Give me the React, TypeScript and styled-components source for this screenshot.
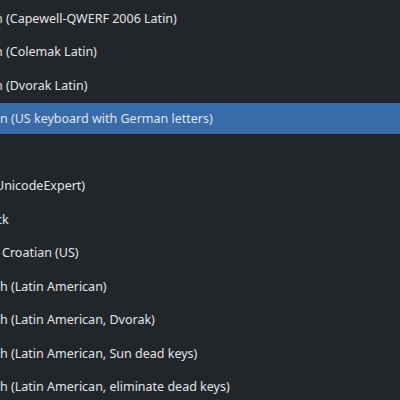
import React from 'react'
import styled, { createGlobalStyle } from 'styled-components'

const GlobalStyle = createGlobalStyle`
  html, body {
    margin: 0;
    padding: 0;
    background: #232629;
  }
  body {
    width: 400px;
    height: 400px;
    overflow: hidden;
  }
`

const ListView = styled.div`
  display: flex;
  flex-direction: column;
  width: 400px;
  height: 400px;
  overflow: hidden;
  background: #232629;
  font-family: 'Noto Sans', 'DejaVu Sans', sans-serif;
  font-size: 12.5px;
  color: #e2e4e6;
  padding-top: 1px;
  box-sizing: border-box;
`

const Row = styled.div<{ $selected?: boolean }>`
  flex: 0 0 33.5px;
  box-sizing: border-box;
  display: flex;
  align-items: center;
  padding-top: 1px;
  white-space: nowrap;
  overflow: hidden;
  background: ${({ $selected }) => ($selected ? '#376baa' : 'transparent')};
  border-top: 1px solid ${({ $selected }) => ($selected ? '#1d2023' : 'transparent')};
  border-bottom: 1px solid ${({ $selected }) => ($selected ? '#1d2023' : 'transparent')};
`

const Label = styled.span<{ $shift: number }>`
  flex: none;
  margin-left: ${({ $shift }) => $shift}px;
`

const layouts = [
  { text: 'n (Capewell-QWERF 2006 Latin)', shift: -5 },
  { text: 'n (Colemak Latin)', shift: -5 },
  { text: 'n (Dvorak Latin)', shift: -5 },
  { text: 'n (US keyboard with German letters)', shift: 0, selected: true },
  { text: '', shift: 0 },
  { text: 'UnicodeExpert)', shift: -5 },
  { text: 'ck', shift: -4 },
  { text: 'Croatian (US)', shift: 2 },
  { text: 'h (Latin American)', shift: 0 },
  { text: 'h (Latin American, Dvorak)', shift: 0 },
  { text: 'h (Latin American, Sun dead keys)', shift: 0 },
  { text: 'h (Latin American, eliminate dead keys)', shift: 0 },
]

const App: React.FC = () => {
  return (
    <>
      <GlobalStyle />
      <ListView>
        {layouts.map((l, i) => (
          <Row key={i} $selected={l.selected}>
            <Label $shift={l.shift}>{l.text}</Label>
          </Row>
        ))}
      </ListView>
    </>
  )
}

export default App
